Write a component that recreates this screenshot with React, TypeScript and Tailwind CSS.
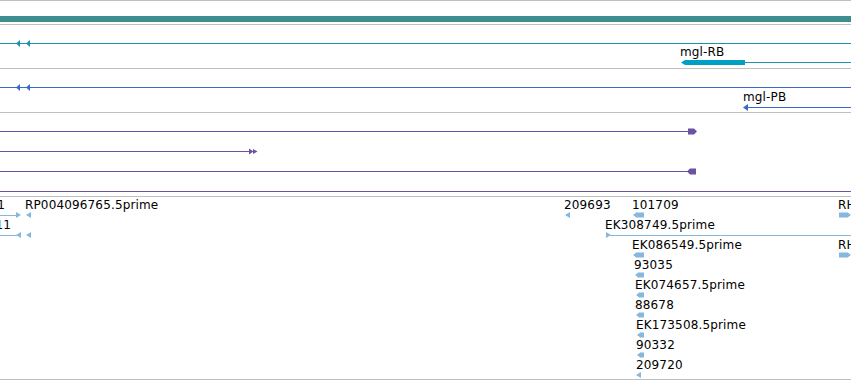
import React from "react";

type Shape = { x: number; y: number; w: number; h: number; pts: string[]; color: string };
type Line = { x1: number; x2: number; y: number; color: string };
type Label = { x: number; y: number; text: string; rightAt?: number };

const TEAL = "#1d92ae";
const TEALBAR = "#00a0c4";
const BLUE = "#3a6ac8";
const PURPLE = "#6b52a3";
const LB = "#86b8de";

const leftTri = (w: number, h: number) => [`0,${h / 2} ${w},0 ${w},${h}`];
const rightTri = (w: number, h: number) => [`0,0 ${w},${h / 2} 0,${h}`];
const leftBlock = (w: number) => [`0,3 4,0 4,0.5 ${w},0.5 ${w},5.5 4,5.5 4,6`];
const rightBlock = (w: number) => [`0,0.5 ${w - 4},0.5 ${w - 4},0 ${w},3 ${w - 4},6 ${w - 4},5.5 0,5.5`];

function Shapes({ items }: { items: Shape[] }) {
  return (
    <>
      {items.map((s, i) => (
        <svg
          key={i}
          className="absolute block"
          style={{ left: s.x, top: s.y }}
          width={s.w}
          height={s.h}
          viewBox={`0 0 ${s.w} ${s.h}`}
        >
          {s.pts.map((p, j) => (
            <polygon key={j} points={p} fill={s.color} />
          ))}
        </svg>
      ))}
    </>
  );
}

function Lines({ items }: { items: Line[] }) {
  return (
    <>
      {items.map((l, i) => (
        <div
          key={i}
          className="absolute h-px"
          style={{ left: l.x1, width: l.x2 - l.x1, top: l.y, backgroundColor: l.color }}
        />
      ))}
    </>
  );
}

function Labels({ items }: { items: Label[] }) {
  return (
    <>
      {items.map((l, i) =>
        l.rightAt !== undefined ? (
          <div
            key={i}
            className="absolute whitespace-nowrap text-right text-black font-['DejaVu_Sans',sans-serif] text-[12px] leading-[14px] tracking-[0.15px]"
            style={{ right: 851 - l.rightAt, top: l.y }}
          >
            {l.text}
          </div>
        ) : (
          <div
            key={i}
            className="absolute whitespace-nowrap text-black font-['DejaVu_Sans',sans-serif] text-[12px] leading-[14px] tracking-[0.15px]"
            style={{ left: l.x, top: l.y }}
          >
            {l.text}
          </div>
        )
      )}
    </>
  );
}

const row = (k: number) => 15 + 20 * k;
const lrow = (k: number) => 1 + 20 * k;

export default function App() {
  const trackB = {
    lines: [
      { x1: 0, x2: 851, y: 18, color: TEAL },
      { x1: 745, x2: 851, y: 37, color: TEAL },
    ],
    shapes: [
      { x: 16, y: 15, w: 4, h: 7, pts: leftTri(4, 7), color: TEAL },
      { x: 26, y: 15, w: 4, h: 7, pts: leftTri(4, 7), color: TEAL },
      { x: 681, y: 35, w: 64, h: 5, pts: ["0,2.5 4,0 64,0 64,5 4,5"], color: TEALBAR },
    ],
    labels: [{ x: 680, y: 20, text: "mgl-RB" }],
  };
  const trackC = {
    lines: [
      { x1: 0, x2: 851, y: 18, color: BLUE },
      { x1: 747, x2: 851, y: 38, color: BLUE },
    ],
    shapes: [
      { x: 16, y: 15, w: 4, h: 7, pts: leftTri(4, 7), color: BLUE },
      { x: 26, y: 15, w: 4, h: 7, pts: leftTri(4, 7), color: BLUE },
      { x: 743, y: 35, w: 5, h: 7, pts: leftTri(5, 7), color: BLUE },
    ],
    labels: [{ x: 743, y: 21, text: "mgl-PB" }],
  };
  const trackD = {
    lines: [
      { x1: 0, x2: 690, y: 18, color: PURPLE },
      { x1: 0, x2: 250, y: 38, color: PURPLE },
      { x1: 0, x2: 690, y: 58, color: PURPLE },
      { x1: 0, x2: 851, y: 78, color: PURPLE },
    ],
    shapes: [
      { x: 688, y: 15, w: 9, h: 7, pts: ["0,0.5 6,0.5 9,3.5 6,6.5 0,6.5"], color: PURPLE },
      { x: 249, y: 35, w: 9, h: 7, pts: ["0,0.5 4.5,3.5 0,6.5", "4,1 8.5,3.5 4,6"], color: PURPLE },
      { x: 687, y: 55, w: 9, h: 7, pts: ["0,3.5 3,0.5 9,0.5 9,6.5 3,6.5"], color: PURPLE },
    ],
  };
  const trackE = {
    lines: [
      { x1: 0, x2: 17, y: 18, color: LB },
      { x1: 0, x2: 17, y: 38, color: LB },
      { x1: 610, x2: 851, y: 38, color: LB },
    ],
    shapes: [
      { x: 16, y: row(0), w: 5, h: 6, pts: rightTri(5, 6), color: LB },
      { x: 26, y: row(0), w: 5, h: 6, pts: leftTri(5, 6), color: LB },
      { x: 16, y: row(1), w: 5, h: 6, pts: leftTri(5, 6), color: LB },
      { x: 26, y: row(1), w: 5, h: 6, pts: leftTri(5, 6), color: LB },
      { x: 565, y: row(0), w: 5, h: 6, pts: leftTri(5, 6), color: LB },
      { x: 633, y: row(0), w: 11, h: 6, pts: leftBlock(11), color: LB },
      { x: 839, y: row(0), w: 12, h: 6, pts: rightBlock(12), color: LB },
      { x: 606, y: row(1), w: 5, h: 6, pts: rightTri(5, 6), color: LB },
      { x: 633, y: row(2), w: 11, h: 6, pts: leftBlock(11), color: LB },
      { x: 839, y: row(2), w: 12, h: 6, pts: rightBlock(12), color: LB },
      { x: 635, y: row(3), w: 9, h: 6, pts: leftBlock(9), color: LB },
      { x: 636, y: row(4), w: 8, h: 6, pts: leftBlock(8), color: LB },
      { x: 636, y: row(5), w: 8, h: 6, pts: leftBlock(8), color: LB },
      { x: 637, y: row(6), w: 7, h: 6, pts: leftBlock(7), color: LB },
      { x: 637, y: row(7), w: 7, h: 6, pts: leftBlock(7), color: LB },
      { x: 636, y: row(8), w: 5, h: 6, pts: leftTri(5, 6), color: LB },
    ],
    labels: [
      { x: 0, y: lrow(0), text: "209691", rightAt: 5 },
      { x: 0, y: lrow(1), text: "EK11", rightAt: 11 },
      { x: 25, y: lrow(0), text: "RP004096765.5prime" },
      { x: 564, y: lrow(0), text: "209693" },
      { x: 632, y: lrow(0), text: "101709" },
      { x: 838, y: lrow(0), text: "RH01234" },
      { x: 605, y: lrow(1), text: "EK308749.5prime" },
      { x: 632, y: lrow(2), text: "EK086549.5prime" },
      { x: 838, y: lrow(2), text: "RH01235" },
      { x: 634, y: lrow(3), text: "93035" },
      { x: 635, y: lrow(4), text: "EK074657.5prime" },
      { x: 635, y: lrow(5), text: "88678" },
      { x: 636, y: lrow(6), text: "EK173508.5prime" },
      { x: 636, y: lrow(7), text: "90332" },
      { x: 636, y: lrow(8), text: "209720" },
    ],
  };

  return (
    <div className="w-[851px] h-[380px] bg-white overflow-hidden border-t border-[#c0c0c0] flex flex-col">
      <div className="relative h-[24px] shrink-0 border-b border-[#c0c0c0]">
        <div className="absolute left-0 right-0 top-[15px] h-[6px] bg-[#3f8e8f]" />
      </div>
      <div className="relative h-[44px] shrink-0 overflow-hidden border-b border-[#c0c0c0]">
        <Lines items={trackB.lines} />
        <Shapes items={trackB.shapes} />
        <Labels items={trackB.labels} />
      </div>
      <div className="relative h-[44px] shrink-0 overflow-hidden border-b border-[#c0c0c0]">
        <Lines items={trackC.lines} />
        <Shapes items={trackC.shapes} />
        <Labels items={trackC.labels} />
      </div>
      <div className="relative h-[84px] shrink-0 overflow-hidden border-b border-[#c0c0c0]">
        <Lines items={trackD.lines} />
        <Shapes items={trackD.shapes} />
      </div>
      <div className="relative h-[183px] shrink-0 overflow-hidden border-b border-[#c0c0c0]">
        <Lines items={trackE.lines} />
        <Shapes items={trackE.shapes} />
        <Labels items={trackE.labels} />
      </div>
    </div>
  );
}
